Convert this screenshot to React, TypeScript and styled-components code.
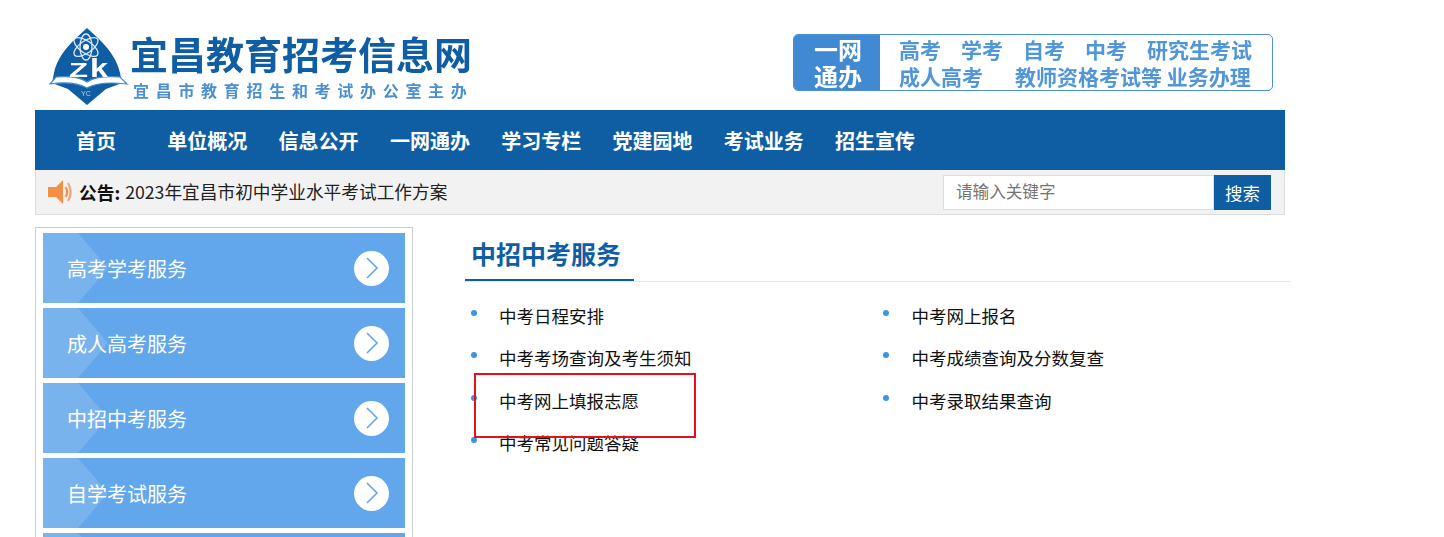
import React from 'react';
import styled, { createGlobalStyle } from 'styled-components';

const FONT = '"Noto Sans CJK SC", "Liberation Sans", sans-serif';

const GlobalStyle = createGlobalStyle`
  html, body {
    margin: 0;
    padding: 0;
    height: 537px;
    overflow: hidden;
    background: #fff;
    font-family: ${FONT};
  }
`;

const navItems = [
  '单位概况',
  '信息公开',
  '一网通办',
  '学习专栏',
  '党建园地',
  '考试业务',
  '招生宣传',
];

const sideItems = [
  '高考学考服务',
  '成人高考服务',
  '中招中考服务',
  '自学考试服务',
  '',
];

const leftLinks = [
  '中考日程安排',
  '中考考场查询及考生须知',
  '中考网上填报志愿',
  '中考常见问题答疑',
];

const rightLinks = ['中考网上报名', '中考成绩查询及分数复查', '中考录取结果查询'];

const Logo = () => (
  <svg width="82" height="80" viewBox="0 0 82 80">
    <path
      d="M39 1 C50 11 68 26 72 46 L74 56 L58 62 L39 78 L20 62 L4 56 L6 46 C10 26 28 11 39 1 Z"
      fill="#0f5ea3"
    />
    <g fill="none" stroke="#dbe9f5" strokeWidth="1.3">
      <ellipse cx="38" cy="20" rx="14" ry="6" transform="rotate(35 38 20)" />
      <ellipse cx="38" cy="20" rx="14" ry="6" transform="rotate(-35 38 20)" />
      <ellipse cx="38" cy="20" rx="6" ry="13" />
    </g>
    <circle cx="38" cy="20" r="3" fill="#fff" />
    <path
      d="M2 57 L8 50 C20 49 32 50 39 55 C46 50 58 49 72 50 L79 57 C62 55 48 56 39 61 C30 56 16 55 2 57 Z"
      fill="#fff"
      stroke="#3f8fd0"
      strokeWidth="1.2"
    />
    <text
      x="21"
      y="50"
      fontFamily="Liberation Sans, sans-serif"
      fontWeight="700"
      fontSize="21"
      textLength="19"
      lengthAdjust="spacingAndGlyphs"
      fill="#fff"
    >
      Z
    </text>
    <text
      x="42"
      y="50"
      fontFamily="Liberation Sans, sans-serif"
      fontWeight="700"
      fontSize="26"
      textLength="18"
      lengthAdjust="spacingAndGlyphs"
      fill="#fff"
    >
      k
    </text>
    <text x="33" y="69" fontFamily="Liberation Sans, sans-serif" fontSize="7" fill="#b8d4ec">
      YC
    </text>
  </svg>
);

const Speaker = () => (
  <svg width="26" height="26" viewBox="0 0 26 26">
    <path d="M1 8 H9 L16 1 V25 L9 18 H1 Z" fill="#f58f47" />
    <path d="M18.5 8 C20.5 11 20.5 15 18.5 18" fill="none" stroke="#f58f47" strokeWidth="2.2" />
    <path d="M21 4 C24.5 10 24.5 16 21 22" fill="none" stroke="#f7a56c" strokeWidth="2.2" />
  </svg>
);

const Chevron = () => (
  <svg width="14" height="22" viewBox="0 0 14 22">
    <path d="M2 1 L12 11 L2 21" fill="none" stroke="#62a6eb" strokeWidth="1.6" />
  </svg>
);

export default function App() {
  return (
    <>
      <GlobalStyle />
      <Page>
        <Header>
          <Brand>
            <Logo />
            <BrandText>
              <BrandTitle>宜昌教育招考信息网</BrandTitle>
              <BrandSub>宜昌市教育招生和考试办公室主办</BrandSub>
            </BrandText>
          </Brand>
          <Banner>
            <BannerTag>
              <span>一网</span>
              <span>通办</span>
            </BannerTag>
            <BannerBody>
              <BannerRow $gap={20}>
                <span>高考</span>
                <span>学考</span>
                <span>自考</span>
                <span>中考</span>
                <span>研究生考试</span>
              </BannerRow>
              <BannerRow $gap={32}>
                <span>成人高考</span>
                <span>教师资格考试等 业务办理</span>
              </BannerRow>
            </BannerBody>
          </Banner>
        </Header>

        <Nav>
          <HomeLink>首页</HomeLink>
          {navItems.map((item) => (
            <NavLink key={item}>{item}</NavLink>
          ))}
        </Nav>

        <Notice>
          <NoticeText>
            <Speaker />
            <strong>公告:</strong>
            <span>2023年宜昌市初中学业水平考试工作方案</span>
          </NoticeText>
          <Search>
            <SearchInput placeholder="请输入关键字" />
            <SearchButton>搜索</SearchButton>
          </Search>
        </Notice>

        <Main>
          <Sidebar>
            {sideItems.map((item, i) => (
              <SideItem key={i}>
                <span>{item}</span>
                <SideArrow>
                  <Chevron />
                </SideArrow>
              </SideItem>
            ))}
          </Sidebar>

          <Content>
            <TitleBar>
              <Title>中招中考服务</Title>
            </TitleBar>
            <Links>
              <LinkColumn>
                {leftLinks.map((item) => (
                  <LinkItem key={item}>{item}</LinkItem>
                ))}
              </LinkColumn>
              <LinkColumn>
                {rightLinks.map((item) => (
                  <LinkItem key={item}>{item}</LinkItem>
                ))}
              </LinkColumn>
            </Links>
            <Highlight />
          </Content>
        </Main>
      </Page>
    </>
  );
}

const Page = styled.div`
  width: 1255px;
  margin-left: 35px;
  height: 537px;
  overflow: hidden;
`;

const Header = styled.header`
  width: 1250px;
  height: 110px;
  box-sizing: border-box;
  padding: 24px 12px 0 13px;
  display: flex;
  justify-content: space-between;
  align-items: flex-start;
`;

const Brand = styled.div`
  display: flex;
  align-items: flex-start;
  margin-top: 3px;
  filter: blur(0.3px);
`;

const BrandText = styled.div`
  display: flex;
  flex-direction: column;
`;

const BrandTitle = styled.div`
  margin-top: 3px;
  font-size: 38px;
  line-height: 46px;
  font-weight: 700;
  color: #0f5ea3;
  white-space: nowrap;
`;

const BrandSub = styled.div`
  margin-top: 3px;
  margin-left: 3px;
  font-size: 16px;
  line-height: 22px;
  font-weight: 700;
  letter-spacing: 6.7px;
  color: #4a90d0;
  white-space: nowrap;
`;

const Banner = styled.div`
  width: 480px;
  height: 57px;
  margin-top: 10px;
  box-sizing: border-box;
  border: 1px solid #4a90d4;
  border-radius: 5px;
  display: flex;
  filter: blur(0.3px);
`;

const BannerTag = styled.div`
  width: 86px;
  padding-bottom: 2px;
  box-sizing: border-box;
  background: #4189d3;
  border-radius: 4px 0 0 4px;
  color: #fff;
  font-size: 24px;
  line-height: 27px;
  font-weight: 700;
  display: flex;
  flex-direction: column;
  align-items: center;
  justify-content: center;
  padding-left: 2px;
`;

const BannerBody = styled.div`
  flex: 1;
  padding-left: 19px;
  display: flex;
  flex-direction: column;
  justify-content: center;
`;

const BannerRow = styled.div<{ $gap: number }>`
  display: flex;
  gap: ${(p) => p.$gap}px;
  font-size: 21px;
  line-height: 27px;
  font-weight: 700;
  color: #5197d8;
  white-space: pre;
`;

const Nav = styled.nav`
  width: 1250px;
  height: 60px;
  background: #0f5ea3;
  display: flex;
  align-items: center;
  gap: 31.3px;
  padding-left: 41px;
  box-sizing: border-box;
  color: #fff;
  font-size: 20px;
  font-weight: 700;
`;

const NavLink = styled.a`
  white-space: nowrap;
`;

const HomeLink = styled(NavLink)`
  margin-right: 20px;
`;

const Notice = styled.div`
  width: 1250px;
  height: 45px;
  box-sizing: border-box;
  background: #f2f2f2;
  border: 1px solid #dcdcdc;
  border-top: 0;
  display: flex;
  align-items: center;
  justify-content: space-between;
  padding: 0 13px 0 11px;
`;

const NoticeText = styled.div`
  display: flex;
  align-items: center;
  font-size: 17.7px;
  line-height: 26px;
  color: #222;
  white-space: nowrap;

  strong {
    margin-left: 6px;
    margin-right: 5px;
    color: #111;
  }

  span {
    position: relative;
    top: -1px;
  }
`;

const Search = styled.div`
  display: flex;
  height: 35px;
`;

const SearchInput = styled.input`
  width: 271px;
  box-sizing: border-box;
  border: 1px solid #ddd;
  background: #fff;
  padding: 0 12px 3px;
  outline: none;
  font-family: ${FONT};
  font-size: 16.6px;

  &::placeholder {
    color: #757575;
    opacity: 1;
  }
`;

const SearchButton = styled.button`
  width: 57px;
  border: 0;
  padding: 0;
  background: #0f5ea3;
  color: #fff;
  font-family: ${FONT};
  font-size: 17.5px;
`;

const Main = styled.div`
  display: flex;
  align-items: flex-start;
  margin-top: 12px;
`;

const Sidebar = styled.aside`
  width: 378px;
  box-sizing: border-box;
  border: 1px solid #ccc;
  padding: 5px 7px;
  display: flex;
  flex-direction: column;
  gap: 5px;
`;

const SideItem = styled.div`
  position: relative;
  height: 70px;
  flex: none;
  background: #62a6eb;
  color: #fff;
  font-size: 20px;
  display: flex;
  align-items: center;
  justify-content: space-between;
  padding: 0 16px 0 24px;

  &::before {
    content: '';
    position: absolute;
    left: 0;
    top: 0;
    width: 65px;
    height: 100%;
    background: rgba(255, 255, 255, 0.15);
    clip-path: polygon(0 0, 35px 0, 65px 50%, 35px 100%, 0 100%);
  }

  span {
    position: relative;
  }
`;

const SideArrow = styled.div`
  position: relative;
  width: 35px;
  height: 35px;
  border-radius: 50%;
  background: #fff;
  display: flex;
  align-items: center;
  justify-content: center;
`;

const Content = styled.section`
  position: relative;
  width: 825px;
  margin-left: 52px;
`;

const TitleBar = styled.div`
  height: 55px;
  box-sizing: border-box;
  border-bottom: 1px solid #e5e5e5;
`;

const Title = styled.h2`
  display: inline-block;
  box-sizing: border-box;
  height: 54px;
  margin: 0;
  padding: 6px 13px 0 6px;
  border-bottom: 2px solid #0f5ea3;
  color: #0f5ea3;
  font-size: 25px;
  line-height: 40px;
  font-weight: 700;
  white-space: nowrap;
`;

const Links = styled.div`
  display: grid;
  grid-template-columns: 412.5px 1fr;
  padding-top: 13px;
`;

const LinkColumn = styled.ul`
  list-style: none;
  margin: 0;
  padding: 0;
`;

const LinkItem = styled.li`
  position: relative;
  height: 42.3px;
  line-height: 42.3px;
  padding-left: 34px;
  font-size: 17.5px;
  color: #111;
  white-space: nowrap;

  &::before {
    content: '';
    position: absolute;
    left: 5.5px;
    top: 15px;
    width: 6px;
    height: 6px;
    border-radius: 50%;
    background: #3b94e6;
  }
`;

const Highlight = styled.div`
  position: absolute;
  left: 9px;
  top: 146px;
  width: 222px;
  height: 65px;
  box-sizing: border-box;
  border: 2px solid #e60f1e;
`;
